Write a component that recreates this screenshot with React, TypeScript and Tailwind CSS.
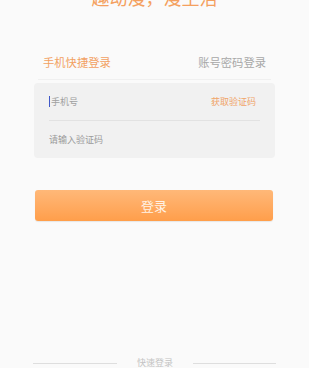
import React from "react";

export default function App() {
  return (
    <div
      className="w-[309px] h-[368px] overflow-hidden bg-[#fafafa] flex flex-col"
      style={{ fontFamily: '"Noto Sans CJK SC", "Noto Sans", sans-serif' }}
    >
      <div className="mt-[-12px] h-[18px] text-center text-[18px] leading-[18px] text-[#f4a05e]">
        趣动漫，漫生活
      </div>

      <div className="mt-[48px] mx-[38px] flex justify-between items-center px-[5px] h-[16px] text-[11.3px] leading-[16px]">
        <span className="text-[#f2a162]">手机快捷登录</span>
        <span className="text-[#a8a8a8]">账号密码登录</span>
      </div>
      <div className="mt-[9px] mx-[38px] h-px bg-[#f0f0f0]" />

      <div className="mt-[3px] ml-[34px] w-[241px] h-[75px] rounded-[4px] bg-[#f1f1f1] px-[15px] flex flex-col">
        <div className="h-[38px] flex items-center justify-between border-b border-[#e2e2e2]">
          <div className="flex items-center">
            <span className="w-px h-[11px] bg-[#4058c8] mr-[1px]" />
            <span className="text-[9px] text-[#a0a0a0]">手机号</span>
          </div>
          <span className="text-[9px] text-[#f0a468] mr-[4px]">获取验证码</span>
        </div>
        <div className="flex-1 flex items-center">
          <span className="text-[9px] text-[#9a9a9a]">请输入验证码</span>
        </div>
      </div>

      <button className="mt-[32px] ml-[35px] w-[238px] h-[31px] rounded-[3px] bg-gradient-to-b from-[#ffb878] to-[#ff9e4a] text-[13px] leading-[29px] text-[#fff3e6] shadow-[0_1px_1px_rgba(0,0,0,0.08)]">
        登录
      </button>

      <div className="mt-[137px] flex items-center h-[10px]">
        <div className="ml-[33px] w-[84px] h-px bg-[#dedede]" />
        <span className="ml-[20px] text-[9px] leading-[10px] text-[#c4c4c4]">快速登录</span>
        <div className="ml-[20px] w-[83px] h-px bg-[#dedede]" />
      </div>
    </div>
  );
}
